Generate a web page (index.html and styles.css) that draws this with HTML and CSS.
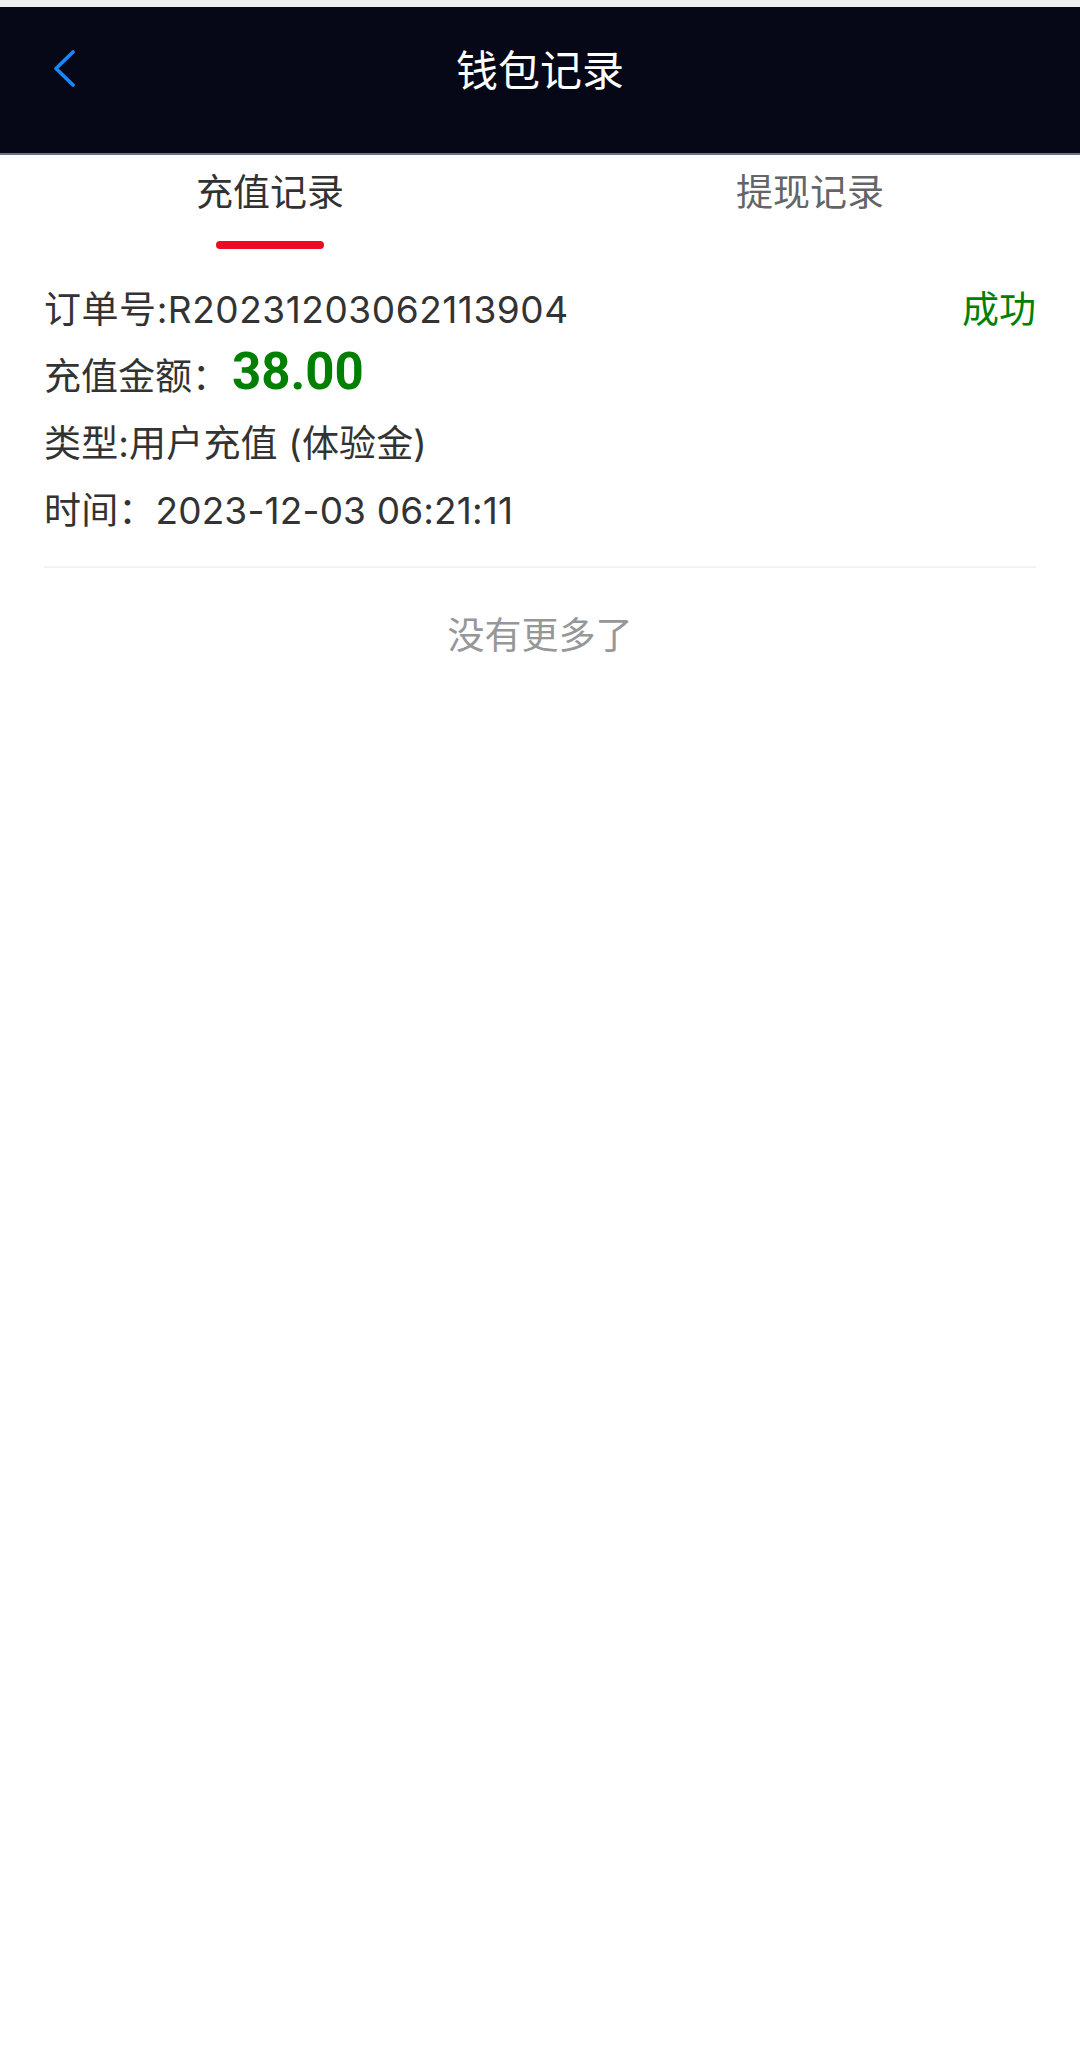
FILE: index.html
```html
<!DOCTYPE html>
<html lang="zh-CN">
<head>
<meta charset="utf-8">
<title>钱包记录</title>
<link rel="stylesheet" href="styles.css">
</head>
<body>
<div class="status"></div>
<header class="nav">
  <div class="nav-bar">
    <div class="nav-left">
      <svg class="back" width="22" height="38" viewBox="0 0 22 38">
        <polyline points="19,3 2,19.5 19,36" fill="none" stroke="#1989fa" stroke-width="3.6" stroke-linecap="round" stroke-linejoin="round"/>
      </svg>
    </div>
    <div class="nav-title">钱包记录</div>
    <div class="nav-right"></div>
  </div>
</header>
<nav class="tabs">
  <div class="tab active">
    <span class="tab-text">充值记录</span>
    <span class="tab-line"></span>
  </div>
  <div class="tab">
    <span class="tab-text">提现记录</span>
  </div>
</nav>
<main class="list">
  <div class="record">
    <div class="row row-head">
      <span class="spaced">订单号:R20231203062113904</span>
      <span class="status-ok">成功</span>
    </div>
    <div class="row">
      <span>充值金额：</span><span class="amount">38.00</span>
    </div>
    <div class="row light">类型:用户充值 (体验金)</div>
    <div class="row light">时间：2023-12-03 06:21:11</div>
  </div>
  <div class="finished">没有更多了</div>
</main>
</body>
</html>
```
FILE: styles.css
```css
html, body {
  margin: 0;
  padding: 0;
  background: #ffffff;
}
body {
  font-family: "Inter", "Noto Sans CJK SC", sans-serif;
  color: #323233;
}
.status {
  height: 7px;
  background: #eeeeee;
}
.nav {
  height: 148px;
  background: #060818;
  border-bottom: 2px solid #6f7280;
  box-sizing: border-box;
}
.nav-bar {
  height: 121px;
  display: grid;
  grid-template-columns: 1fr auto 1fr;
  align-items: center;
}
.nav-left {
  padding-left: 54px;
  display: flex;
  align-items: center;
}
.back {
  display: block;
}
.nav-title {
  font-family: "Noto Sans CJK SC", sans-serif;
  font-size: 42px;
  font-weight: 400;
  color: #ffffff;
  line-height: 1;
}
.tabs {
  display: flex;
  height: 96px;
}
.tab {
  flex: 1;
  display: flex;
  flex-direction: column;
  align-items: center;
}
.tab-text {
  font-family: "Noto Sans CJK SC", sans-serif;
  font-size: 37px;
  line-height: 70px;
  color: #646566;
}
.tab.active .tab-text {
  color: #323233;
}
.tab-line {
  margin-top: 16px;
  width: 108px;
  height: 8px;
  border-radius: 4px;
  background: #ee0a24;
}
.list {
  padding: 0 44px;
}
.record {
  padding-top: 22px;
  padding-bottom: 25px;
  border-bottom: 2px solid #f2f3f5;
}
.row {
  height: 67px;
  display: flex;
  align-items: center;
  font-size: 37px;
  color: #333333;
  white-space: nowrap;
}
.spaced {
  letter-spacing: 0.55px;
}
.light {
  letter-spacing: 0.15px;
}
.row-head {
  justify-content: space-between;
}
.status-ok {
  color: #008000;
  font-family: "Noto Sans CJK SC", sans-serif;
}
.amount {
  font-family: "Roboto", sans-serif;
  font-size: 51px;
  font-weight: 700;
  color: #008000;
  margin-left: 3px;
  position: relative;
  top: -2px;
}
.finished {
  height: 131px;
  line-height: 131px;
  text-align: center;
  font-family: "Noto Sans CJK SC", sans-serif;
  font-size: 37px;
  color: #969799;
}
```
